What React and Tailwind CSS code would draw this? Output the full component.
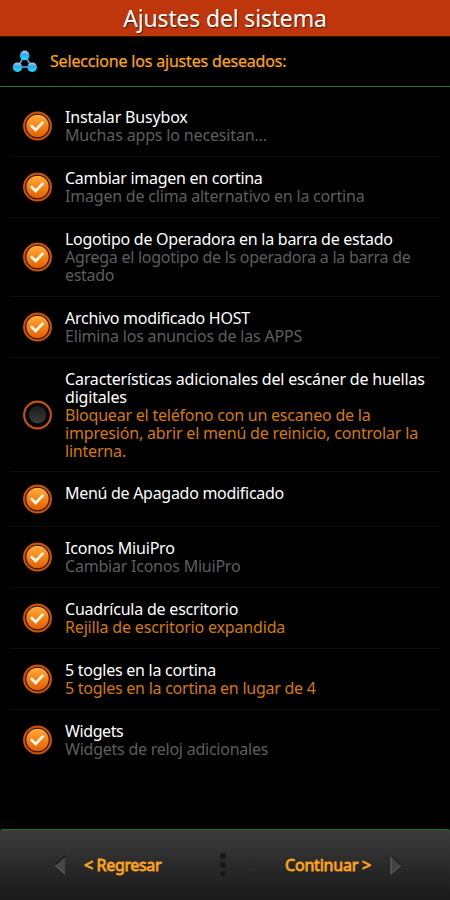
const options = [
  { title: [['Instalar Busybox', 'tracking-[-0.17px]']], note: [['Muchas apps lo necesitan...', 'tracking-[-0.16px]']], on: true },
  { title: [['Cambiar imagen en cortina', 'tracking-[-0.28px]']], note: [['Imagen de clima alternativo en la cortina', 'tracking-[-0.2px]']], on: true },
  {
    title: [['Logotipo de Operadora en la barra de estado', 'tracking-[-0.26px]']],
    note: [['Agrega el logotipo de ls operadora a la barra de', 'tracking-[-0.27px]'], ['estado', 'tracking-[-0.3px]']],
    on: true,
  },
  { title: [['Archivo modificado HOST', 'tracking-[-0.26px]']], note: [['Elimina los anuncios de las APPS', 'tracking-[-0.19px]']], on: true },
  {
    title: [['Características adicionales del escáner de huellas', 'tracking-[-0.18px]'], ['digitales', 'tracking-[-0.2px]']],
    note: [
      ['Bloquear el teléfono con un escaneo de la', 'tracking-[-0.22px]'],
      ['impresión, abrir el menú de reinicio, controlar la', 'tracking-[-0.18px]'],
      ['linterna.', 'tracking-[-0.2px]'],
    ],
    on: false,
    accent: true,
    tight: true,
  },
  { title: [['Menú de Apagado modificado', 'tracking-[-0.29px]']], on: true },
  { title: [['Iconos MiuiPro', 'tracking-[-0.2px]']], note: [['Cambiar Iconos MiuiPro', 'tracking-[-0.22px]']], on: true },
  { title: [['Cuadrícula de escritorio', 'tracking-[-0.22px]']], note: [['Rejilla de escritorio expandida', 'tracking-[-0.17px]']], on: true, accent: true },
  { title: [['5 togles en la cortina', 'tracking-[-0.26px]']], note: [['5 togles en la cortina en lugar de 4', 'tracking-[-0.25px]']], on: true, accent: true },
  { title: [['Widgets', 'tracking-[-0.4px]']], note: [['Widgets de reloj adicionales', 'tracking-[-0.24px]']], on: true, last: true },
];

function Check({ on }) {
  return (
    <svg className="h-[30px] w-[30px] shrink-0" viewBox="0 0 30 30">
      <circle cx="15.5" cy="15" r="13.4" fill={on ? '#2b1000' : '#050505'} stroke="#c95306" strokeWidth="2.1" />
      {on ? (
        <>
          <circle cx="15.5" cy="15" r="11.2" fill="url(#orb)" />
          <path d="M8.9 14.3 L13.7 18.9 L21.3 10.9" fill="none" stroke="#fff6e8" strokeWidth="2.8" />
        </>
      ) : (
        <circle cx="15.5" cy="14.6" r="8.8" fill="url(#off)" />
      )}
    </svg>
  );
}

function Molecule() {
  return (
    <svg className="h-6 w-[26px] shrink-0" viewBox="0 0 26 24">
      <path d="M12.7 5.5 L5.5 17 H20 Z" fill="none" stroke="#6fa9dc" strokeWidth="1.5" />
      <circle cx="12.7" cy="5.4" r="4.8" fill="url(#ball)" />
      <circle cx="5.5" cy="17.2" r="4.8" fill="url(#ball)" />
      <circle cx="20.2" cy="17.2" r="4.8" fill="url(#ball)" />
    </svg>
  );
}

function Lines({ lines, className }) {
  return (
    <div className={className}>
      {lines.map(([text, tracking]) => (
        <p key={text} className={tracking}>{text}</p>
      ))}
    </div>
  );
}

export default function App() {
  return (
    <div className="flex h-[900px] w-[450px] flex-col overflow-hidden bg-black font-['Noto_Sans','Open_Sans',sans-serif]">
      <svg className="absolute h-0 w-0">
        <defs>
          <linearGradient id="orb" x1="0" y1="0" x2="0" y2="1">
            <stop offset="0" stopColor="#ffad3a" />
            <stop offset=".5" stopColor="#f58318" />
            <stop offset="1" stopColor="#df6102" />
          </linearGradient>
          <linearGradient id="off" x1="0" y1="0" x2="0" y2="1">
            <stop offset="0" stopColor="#1b1b1b" />
            <stop offset="1" stopColor="#3b3b3b" />
          </linearGradient>
          <linearGradient id="ball" x1="0" y1="0" x2="0" y2="1">
            <stop offset="0" stopColor="#a5d0f2" />
            <stop offset=".45" stopColor="#3c9fe8" />
            <stop offset=".6" stopColor="#10c8ff" />
            <stop offset="1" stopColor="#25dfff" />
          </linearGradient>
        </defs>
      </svg>

      <header className="flex h-[37px] shrink-0 items-center justify-center border-b border-[#3a1206] bg-[#c0360c] text-[23px] leading-9 tracking-[-0.18px] text-white [text-shadow:1px_1px_1px_#3a2008]">
        <h1>Ajustes del sistema</h1>
      </header>

      <div className="flex h-[50px] shrink-0 items-center border-b border-[#1c7a1c] pl-3">
        <Molecule />
        <h2 className="mb-0.5 ml-3 text-[16px] leading-5 tracking-[-0.18px] whitespace-nowrap text-[#f9a41c] [-webkit-text-stroke:0.25px_#f9a41c]">Seleccione los ajustes deseados:</h2>
      </div>

      <ul className="mx-2.5 mt-[9px] flex flex-1 flex-col">
        {options.map((o) => (
          <li
            key={o.title[0][0]}
            className={`flex items-center border-b pt-3 pr-1 pl-3 ${o.tight ? 'pb-[11px]' : 'pb-3'} ${o.last ? 'border-transparent' : 'border-[#0e0e0e]'}`}
          >
            <Check on={o.on} />
            <div className="ml-[13px] self-start text-[16px] leading-[18px] whitespace-nowrap">
              <Lines lines={o.title} className="text-white" />
              {o.note && <Lines lines={o.note} className={o.accent ? 'text-[#d47a06]' : 'text-[#5e5e5c]'} />}
            </div>
          </li>
        ))}
      </ul>

      <footer className="flex h-[71px] shrink-0 items-center rounded-t-[3px] border-t border-[#1c701c] bg-linear-to-b from-[#3c3c3c] to-[#191919] text-[16px] tracking-[-0.2px] whitespace-nowrap text-[#fda31d] [-webkit-text-stroke:0.8px_#fda31d]">
        <svg className="ml-[54px] h-5 w-3" viewBox="0 0 12 20">
          <path d="M11 1 V19 L1 10 Z" fill="#444748" />
          <path d="M11 1 L1 10" stroke="#151515" strokeWidth="1.3" />
          <path d="M1 10 L11 19" stroke="#707577" strokeWidth="1" />
        </svg>
        <button className="ml-[18px] w-[80px] text-left tracking-[-0.35px]">&lt; Regresar</button>
        <svg className="ml-[55px] h-[26px] w-2" viewBox="0 0 8 26">
          <path d="M1 1h6v6h-6z M1 10h6v6h-6z M1 19h6v6h-6z" fill="#171717" stroke="#303030" strokeWidth=".6" />
        </svg>
        <button className="ml-[58px] w-[88px] text-left">Continuar &gt;</button>
        <svg className="ml-[17px] h-5 w-3" viewBox="0 0 12 20">
          <path d="M1 1 V19 L11 10 Z" fill="#3f4243" />
          <path d="M1 1 V19 L11 10" fill="none" stroke="#66696b" strokeWidth="1" />
          <path d="M1 1 L11 10" stroke="#202020" strokeWidth="1.3" />
        </svg>
      </footer>
    </div>
  );
}
